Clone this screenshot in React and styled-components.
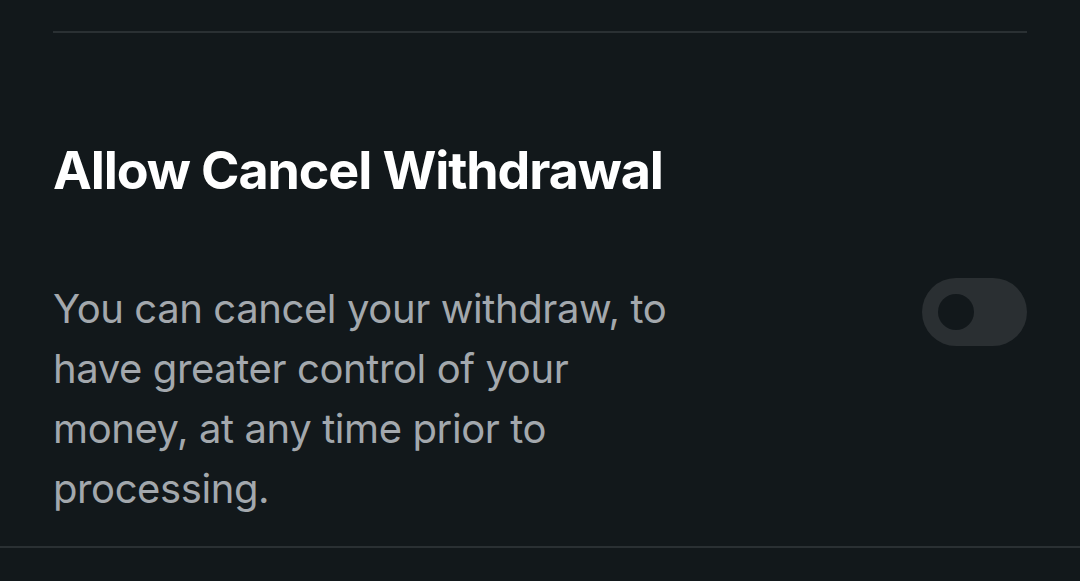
import React from 'react'
import styled, { createGlobalStyle } from 'styled-components';

const GlobalStyle = createGlobalStyle`
  html, body {
    margin: 0;
    padding: 0;
    background: #12181b;
  }
  body {
    font-family: Inter, "Noto Sans", sans-serif;
  }
`;

const Page = styled.div`
  width: 1080px;
  height: 581px;
  background: #12181b;
  overflow: hidden;
`;

const Section = styled.div`
  padding: 0 53px;
`;

const Divider = styled.div`
  height: 2px;
  background: #2a3033;
  margin-top: ${p => p.$top || 0}px;
`;

const Heading = styled.h2`
  margin: 108px 0 0;
  color: #ffffff;
  font-size: 52px;
  line-height: 60px;
  font-weight: 700;
  letter-spacing: -1.1px;
`;

const Row = styled.div`
  display: flex;
  justify-content: space-between;
  align-items: flex-start;
  margin-top: 78px;
`;

const Description = styled.p`
  margin: 0;
  max-width: 630px;
  color: #a3a8ad;
  font-size: 40px;
  line-height: 60px;
  font-weight: 400;
  letter-spacing: -0.4px;
`;

const Toggle = styled.button`
  flex: none;
  width: 105px;
  height: 68px;
  margin-top: -1px;
  border: none;
  border-radius: 34px;
  background: #2a2f32;
  padding: 0 0 0 16px;
  display: flex;
  align-items: center;
  cursor: pointer;
`;

const Knob = styled.span`
  width: 36px;
  height: 36px;
  border-radius: 50%;
  background: #12181b;
`;

const App = () => {
    return (
        <Page>
            <GlobalStyle />
            <Section>
                <Divider $top={31} />
                <Heading>Allow Cancel Withdrawal</Heading>
                <Row>
                    <Description>
                        You can cancel your withdraw, to have greater control of your money, at any time prior to processing.
                    </Description>
                    <Toggle aria-label="Allow cancel withdrawal">
                        <Knob />
                    </Toggle>
                </Row>
            </Section>
            <Divider $top={27} />
        </Page>
    )
}

export default App
